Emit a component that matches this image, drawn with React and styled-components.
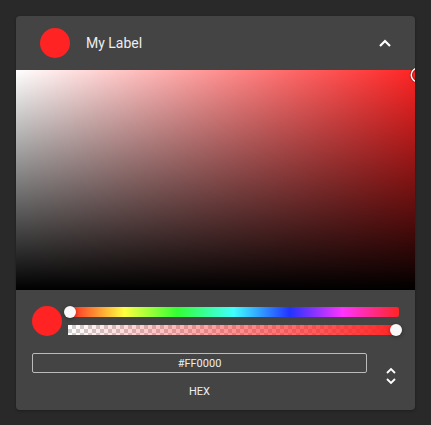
import React from 'react';
import styled, { createGlobalStyle } from 'styled-components';

const GlobalStyle = createGlobalStyle`
  html, body {
    margin: 0;
    padding: 0;
    background: #292929;
    font-family: Roboto, "Liberation Sans", sans-serif;
  }
`

const Page = styled.div`
  padding: 16px;
  width: 431px;
  height: 425px;
  box-sizing: border-box;
`

const Card = styled.div`
  width: 399px;
  background: #444444;
  border-radius: 4px;
  overflow: hidden;
  box-shadow: 0 1px 3px rgba(0, 0, 0, 0.3);
`

const Header = styled.div`
  height: 54px;
  display: flex;
  align-items: center;
  padding: 0 24px;
  gap: 16px;
`

const Dot = styled.div`
  width: ${p => p.size}px;
  height: ${p => p.size}px;
  border-radius: 50%;
  background: ${p => p.color};
  flex-shrink: 0;
`

const Label = styled.div`
  flex: 1;
  color: #eeeeee;
  font-size: 14px;
`

const IconButton = styled.div`
  display: flex;
  align-items: center;
  justify-content: center;
  width: 24px;
  color: #fff;
  margin-right: -6px;
`

const Saturation = styled.div`
  position: relative;
  height: 220px;
  background:
    linear-gradient(to top, #000, rgba(0, 0, 0, 0)),
    linear-gradient(to right, #fff, rgba(255, 255, 255, 0)),
    #ff2424;
`

const SatPointer = styled.div`
  position: absolute;
  right: -9px;
  top: -1px;
  width: 12px;
  height: 12px;
  border-radius: 50%;
  box-sizing: border-box;
  box-shadow: 0 0 0 1.5px #fff, inset 0 0 1px 1px rgba(0, 0, 0, 0.3), 0 0 1px 2px rgba(0, 0, 0, 0.4);
`

const Controls = styled.div`
  padding: 16px 16px 12px;
`

const SliderRow = styled.div`
  display: flex;
  align-items: center;
  gap: 6px;
`

const Sliders = styled.div`
  flex: 1;
  display: flex;
  flex-direction: column;
  gap: 8px;
`

const Track = styled.div`
  position: relative;
  height: 10px;
  border-radius: 2px;
  background: ${p => p.bg};
`

const Checker = styled(Track)`
  background-color: #fff;
  background-image:
    linear-gradient(to right, rgba(255, 36, 36, 0), #ff2424),
    linear-gradient(45deg, #cfcfcf 25%, transparent 25%, transparent 75%, #cfcfcf 75%),
    linear-gradient(45deg, #cfcfcf 25%, transparent 25%, transparent 75%, #cfcfcf 75%);
  background-size: 100% 100%, 8px 8px, 8px 8px;
  background-position: 0 0, 0 0, 4px 4px;
  border-radius: 0 3px 3px 0;
`

const Thumb = styled.div`
  position: absolute;
  top: -1px;
  width: 12px;
  height: 12px;
  border-radius: 50%;
  background: #f8f8f8;
  box-shadow: 0 1px 4px rgba(0, 0, 0, 0.37);
`

const FieldRow = styled.div`
  display: flex;
  align-items: flex-start;
  margin-top: 17px;
`

const Field = styled.div`
  flex: 1;
  display: flex;
  flex-direction: column;
  align-items: center;
`

const HexInput = styled.div`
  width: 100%;
  height: 20px;
  box-sizing: border-box;
  border: 1px solid #bbbbbb;
  border-radius: 2px;
  display: flex;
  align-items: center;
  justify-content: center;
  color: #eeeeee;
  font-size: 11px;
`

const FieldLabel = styled.div`
  margin-top: 12px;
  color: #eeeeee;
  font-size: 11px;
`

const Toggle = styled.div`
  width: 48px;
  display: flex;
  justify-content: center;
  margin-top: 13px;
  margin-right: -16px;
`

const hue =
  'linear-gradient(to right, #ff2424 0%, #ffff40 17%, #33ff33 33%, #40ffff 50%, #2233ff 67%, #ff33ff 83%, #ff2424 100%)'

export default function App() {
  return (
    <>
      <GlobalStyle />
      <Page>
        <Card>
          <Header>
            <Dot size={30} color="#ff2323" />
            <Label>My Label</Label>
            <IconButton>
              <svg width="14" height="10" viewBox="0 0 14 10">
                <path d="M2 8 L7 3 L12 8" fill="none" stroke="#fff" strokeWidth="2.2" />
              </svg>
            </IconButton>
          </Header>
          <Saturation>
            <SatPointer />
          </Saturation>
          <Controls>
            <SliderRow>
              <Dot size={30} color="#ff2323" />
              <Sliders>
                <Track bg={hue}>
                  <Thumb style={{ left: '-4px' }} />
                </Track>
                <Checker>
                  <Thumb style={{ right: '-3px' }} />
                </Checker>
              </Sliders>
            </SliderRow>
            <FieldRow>
              <Field>
                <HexInput>#FF0000</HexInput>
                <FieldLabel>HEX</FieldLabel>
              </Field>
              <Toggle>
                <svg width="12" height="20" viewBox="0 0 12 20">
                  <path d="M2 7 L6 3 L10 7" fill="none" stroke="#fff" strokeWidth="1.8" />
                  <path d="M2 13 L6 17 L10 13" fill="none" stroke="#fff" strokeWidth="1.8" />
                </svg>
              </Toggle>
            </FieldRow>
          </Controls>
        </Card>
      </Page>
    </>
  );
}
